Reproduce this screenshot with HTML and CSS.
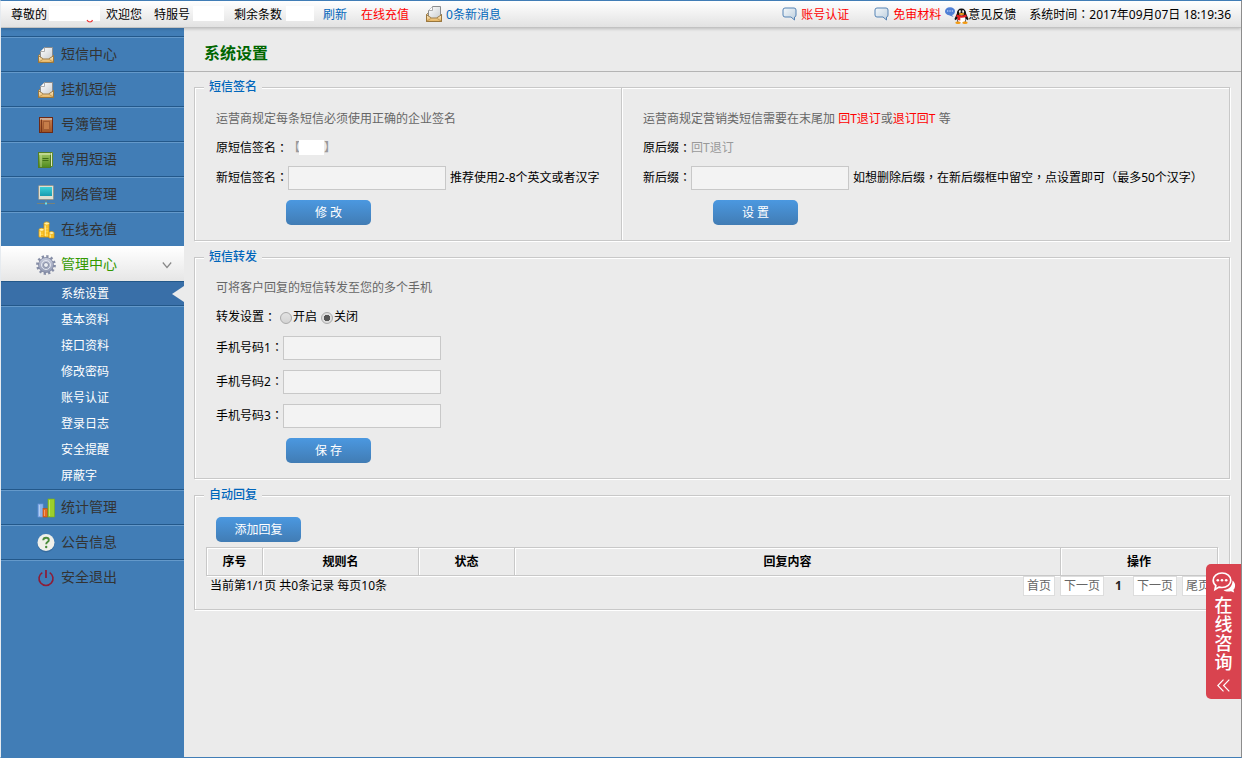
FILE: index.html
```html
<!DOCTYPE html>
<html lang="zh-CN">
<head>
<meta charset="utf-8">
<title>系统设置</title>
<link rel="stylesheet" href="styles.css">
</head>
<body>
<svg class="defs" aria-hidden="true">
  <defs>
    <linearGradient id="g-env" x1="0" y1="0" x2="0" y2="1"><stop offset="0" stop-color="#fdf0d2"/><stop offset="1" stop-color="#e5b058"/></linearGradient>
    <linearGradient id="g-paper" x1="0" y1="0" x2="1" y2="1"><stop offset="0" stop-color="#fff"/><stop offset="1" stop-color="#c9cdd0"/></linearGradient>
    <linearGradient id="g-book" x1="0" y1="0" x2="0" y2="1"><stop offset="0" stop-color="#c98050"/><stop offset="1" stop-color="#9d5325"/></linearGradient>
    <linearGradient id="g-green" x1="0" y1="0" x2="0" y2="1"><stop offset="0" stop-color="#a3c964"/><stop offset="1" stop-color="#4f8a1e"/></linearGradient>
    <linearGradient id="g-screen" x1="0" y1="0" x2="0" y2="1"><stop offset="0" stop-color="#3bd0d8"/><stop offset="1" stop-color="#189cb0"/></linearGradient>
    <linearGradient id="g-gear" x1="0" y1="0" x2="0" y2="1"><stop offset="0" stop-color="#c9cddd"/><stop offset="1" stop-color="#8f97b0"/></linearGradient>
    <linearGradient id="g-bub" x1="0" y1="0" x2="1" y2="1"><stop offset="0" stop-color="#f4f8fb"/><stop offset="1" stop-color="#bccedd"/></linearGradient>
    <symbol id="mail" viewBox="0 0 16 16">
      <path d="M.5 8.500 3 6.500h10l2.500 2v7H.5z" fill="url(#g-env)" stroke="#94733c"/>
      <path d="M2.500 11V4.500l4-4h8V11l-2 1.500h-8z" fill="url(#g-paper)" stroke="#8b8d8e"/>
      <path d="M2.500 4.500h4v-4" fill="#fff" stroke="#999" stroke-width=".8"/>
      <path d="M.5 8.800 5.500 12h5l5-3.200v6.700H.5z" fill="url(#g-env)" stroke="#94733c" stroke-width=".9"/>
      <path d="m1 15 4.500-3M15 15l-4.500-3" fill="none" stroke="#b78f4c" stroke-width=".8"/>
    </symbol>
    <symbol id="bubble" viewBox="0 0 15 14">
      <path d="M3 1h9q2 0 2 2v5q0 2-1.500 2v3L9 10H3Q1 10 1 8V3q0-2 2-2z" fill="url(#g-bub)" stroke="#5583b5" stroke-linejoin="round"/>
    </symbol>
    <symbol id="book" viewBox="0 0 18 18">
      <rect x="2.500" y="1.500" width="13" height="15" fill="url(#g-book)" stroke="#6d2a17"/>
      <path d="M3 3h12" stroke="#d8dadb"/><path d="M4.500 3.500v13" stroke="#7a3518"/>
      <rect x="6.500" y="5.500" width="6" height="8" fill="#c67d49" stroke="#a25c33"/>
    </symbol>
    <symbol id="notes" viewBox="0 0 18 18">
      <path d="M13 1.500h2.500v14H13" fill="#dfeab8" stroke="#5f8a2d"/>
      <rect x="1.500" y="1.500" width="12" height="15" fill="url(#g-green)" stroke="#527d25"/>
      <path d="M2 3h12" stroke="#e3edc4"/><path d="M4 4v12" stroke="#d1e3a4" stroke-width=".8"/>
      <path d="M5.500 7.500h6M5.500 9.500h6" stroke="#3f6f17"/>
    </symbol>
    <symbol id="screen" viewBox="0 0 18 20">
      <rect x="1.500" y=".5" width="15" height="14" rx="1" fill="#dedfd2" stroke="#8c9491"/>
      <rect x="3" y="2" width="12" height="9" fill="url(#g-screen)"/>
      <path d="M9 15v4M0 18.500h18" stroke="#77827a"/><path d="M8 18.500h2" stroke="#6fe0e8" stroke-width="2"/>
    </symbol>
    <symbol id="coins" viewBox="0 0 18 18">
      <g fill="#ffd23b" stroke="#df9500" stroke-width=".8">
        <path d="M7 2.500v13.500h5V2.500z"/><path d="M2 9v7h5V9zM12 12v5h5v-5z"/>
      </g>
      <g fill="#fff0a6" stroke="#e5a200" stroke-width=".7">
        <ellipse cx="9.700" cy="2.500" rx="2.700" ry="1.600"/><ellipse cx="4.600" cy="8.800" rx="2.600" ry="1.500"/><ellipse cx="14.500" cy="12" rx="2.600" ry="1.500"/>
      </g>
      <path d="M7.500 6h4M7.500 9h4M7.500 12h4M2.500 12h4M2.500 14.500h4M12.500 15h4" stroke="#f0aa13" stroke-width=".8"/>
      <path d="M8.200 4.500V15M3.200 10.500V15.500M13.200 13.500v3" stroke="#fff2b0"/>
    </symbol>
    <symbol id="gear" viewBox="0 0 20 20">
      <circle cx="10" cy="10" r="8.500" fill="none" stroke="#858da6" stroke-width="2.800" stroke-dasharray="2.200 2.250"/>
      <circle cx="10" cy="10" r="7.500" fill="url(#g-gear)" stroke="#7c849e" stroke-width=".8"/>
      <circle cx="10" cy="10" r="4.500" fill="none" stroke="#e3e6ef"/>
      <circle cx="10" cy="10" r="2.500" fill="#eceef2" stroke="#848ca4"/>
    </symbol>
    <symbol id="bars" viewBox="0 0 18 20">
      <rect x="1" y="6" width="5" height="13" fill="#8bb2ea" stroke="#6d98dc" stroke-width=".6"/>
      <rect x="6" y="10.500" width="4.500" height="8.500" fill="#e5691f" stroke="#bf4c10" stroke-width=".6"/>
      <rect x="11" y="1" width="6.500" height="18" fill="#9ccf2c" stroke="#78ab13" stroke-width=".6"/>
      <path d="M2.500 7v11M12.500 2v16M7.500 12v6" stroke="#fff" stroke-opacity=".35"/>
    </symbol>
    <symbol id="help" viewBox="0 0 18 20">
      <ellipse cx="9" cy="11" rx="8.500" ry="8.500" fill="#275987" opacity=".45"/>
      <circle cx="9" cy="9.500" r="8.500" fill="#f0f0ea"/>
      <path d="M6.200 7.300q.2-2.600 2.900-2.600 2.700 0 2.700 2.200 0 1.300-1.300 2.100-1.300.8-1.300 2.300" fill="none" stroke="#4b8b3b" stroke-width="1.900"/>
      <circle cx="9.200" cy="14" r="1.200" fill="#4b8b3b"/>
    </symbol>
    <symbol id="power" viewBox="0 0 18 18">
      <path d="M5.300 3.600a7 7 0 1 0 7.400 0" fill="none" stroke="#8e1c36" stroke-width="1.600"/>
      <path d="M9 1v8" stroke="#8e1c36" stroke-width="1.700"/>
    </symbol>
    <symbol id="chat" viewBox="0 0 10 10">
      <path d="M5 .3c3 0 5 1.700 5 3.900S8.300 8 7 8l1.500 2L4 8.200C1.500 7.800 0 6.200 0 4.200S2 .3 5 .3z" fill="#4f80d6"/>
      <path d="M2 4h1.300M4.400 4h1.300M6.800 4H8" stroke="#dce8ff" stroke-width="1.200"/>
    </symbol>
    <symbol id="penguin" viewBox="0 0 15 16">
      <path d="M7.500.5c3 0 4.600 2 4.600 5l2.400 5.500-.8 1.200-1.400-1.200-1 3.500H3.700l-1-3.500-1.400 1.200L.5 11l2.400-5.500c0-3 1.600-5 4.600-5z" fill="#111"/>
      <ellipse cx="7.500" cy="11.300" rx="4" ry="3.700" fill="#fff"/>
      <ellipse cx="4" cy="14.700" rx="2.700" ry="1.200" fill="#f39a12"/><ellipse cx="11" cy="14.700" rx="2.700" ry="1.200" fill="#f39a12"/>
      <ellipse cx="6" cy="3.700" rx="1.100" ry="1.400" fill="#fff"/><ellipse cx="9" cy="3.700" rx="1.100" ry="1.400" fill="#fff"/>
      <circle cx="6.300" cy="3.900" r=".5"/><circle cx="8.700" cy="3.900" r=".5"/>
      <ellipse cx="7.500" cy="6" rx="2.800" ry=".9" fill="#f6a31a"/>
      <path d="M2.800 6.500q4.700 2.300 9.400 0l.6 2.200Q7.500 11 2.200 8.700zM3.600 9l2.700.9v2.600l-2.700-.5z" fill="#e51d20"/>
    </symbol>
  </defs>
</svg>

<header class="topbar">
  <div class="account">
    <span>尊敬的</span>
    <span class="blank blank-user"><svg viewBox="0 0 51 17"><path d="M38 14q1 2 3 2t2.500-2" fill="none" stroke="#e33" stroke-width="1.200"/></svg></span>
    <span class="welcome">欢迎您</span>
    <span>特服号</span>
    <span class="blank blank-no"></span>
    <span>剩余条数</span>
    <span class="blank blank-count"></span>
    <a class="refresh" href="#">刷新</a>
    <a class="recharge" href="#">在线充值</a>
    <a class="message" href="#"><svg class="i16"><use href="#mail"/></svg>0条新消息</a>
  </div>
  <div class="tools">
    <a class="red verify" href="#"><svg class="i-bubble"><use href="#bubble"/></svg>账号认证</a>
    <a class="red" href="#"><svg class="i-bubble"><use href="#bubble"/></svg>免审材料</a>
    <a class="feedback" href="#"><svg class="i-chat"><use href="#chat"/></svg><svg class="i-qq"><use href="#penguin"/></svg>意见反馈</a>
    <span class="clock">系统时间<span class="cp" lang="zh-TW">：</span>2017年09月07日 18:19:36</span>
  </div>
</header>

<div class="shell">
  <nav class="sidebar">
    <a class="item" href="#"><svg><use href="#mail" x="1" y="2" width="16" height="16"/></svg>短信中心</a>
    <a class="item" href="#"><svg><use href="#mail" x="1" y="2" width="16" height="16"/></svg>挂机短信</a>
    <a class="item" href="#"><svg><use href="#book"/></svg>号簿管理</a>
    <a class="item" href="#"><svg><use href="#notes"/></svg>常用短语</a>
    <a class="item" href="#"><svg><use href="#screen"/></svg>网络管理</a>
    <a class="item" href="#"><svg><use href="#coins"/></svg>在线充值</a>
    <a class="item open" href="#"><svg class="cog"><use href="#gear"/></svg>管理中心<svg class="chev" viewBox="0 0 10 8"><path d="M.8 1.500 5 6.500l4.200-5" fill="none" stroke="#888" stroke-width="1.200"/></svg></a>
    <div class="submenu">
      <a class="current" href="#">系统设置</a>
      <a href="#">基本资料</a>
      <a href="#">接口资料</a>
      <a href="#">修改密码</a>
      <a href="#">账号认证</a>
      <a href="#">登录日志</a>
      <a href="#">安全提醒</a>
      <a href="#">屏蔽字</a>
    </div>
    <a class="item" href="#"><svg><use href="#bars"/></svg>统计管理</a>
    <a class="item" href="#"><svg><use href="#help"/></svg>公告信息</a>
    <a class="item" href="#"><svg><use href="#power"/></svg>安全退出</a>
  </nav>

  <main class="main">
    <h1>系统设置</h1>
    <div class="panels">
      <fieldset>
        <legend>短信签名</legend>
        <div class="split">
          <div class="pane">
            <p class="row tip">运营商规定每条短信必须使用正确的企业签名</p>
            <p class="row">原短信签名<span class="cp" lang="zh-TW">：</span><span class="old sign">【<span class="blank blank-sign"></span>】</span></p>
            <div class="row field"><label for="sign">新短信签名<span class="cp" lang="zh-TW">：</span></label><input id="sign" class="text" type="text"><span class="hint">推荐使用2-8个英文或者汉字</span></div>
            <div class="action"><button class="btn" type="button">修 改</button></div>
          </div>
          <div class="pane">
            <p class="row tip">运营商规定营销类短信需要在末尾加&nbsp;<em>回T退订</em>或<em>退订回T</em>&nbsp;等</p>
            <p class="row">原后缀<span class="cp" lang="zh-TW">：</span><span class="old">回T退订</span></p>
            <div class="row field"><label for="suffix">新后缀<span class="cp" lang="zh-TW">：</span></label><input id="suffix" class="text" type="text"><span class="hint">如想删除后缀<span class="cp" lang="zh-TW">，</span>在新后缀框中留空<span class="cp" lang="zh-TW">，</span>点设置即可<span class="cp" lang="zh-TW">（</span>最多50个汉字<span class="cp" lang="zh-TW">）</span></span></div>
            <div class="action"><button class="btn" type="button">设 置</button></div>
          </div>
        </div>
      </fieldset>

      <fieldset>
        <legend>短信转发</legend>
        <div class="forward">
          <p class="row tip">可将客户回复的短信转发至您的多个手机</p>
          <div class="row">转发设置<span class="cp" lang="zh-TW">：</span>
            <span class="radios"><input id="on" type="radio" name="forward"><label for="on">开启</label><input id="off" type="radio" name="forward" checked><label for="off">关闭</label></span>
          </div>
          <div class="row phone"><label for="p1">手机号码1<span class="cp" lang="zh-TW">：</span></label><input id="p1" class="text" type="text"></div>
          <div class="row phone"><label for="p2">手机号码2<span class="cp" lang="zh-TW">：</span></label><input id="p2" class="text" type="text"></div>
          <div class="row phone"><label for="p3">手机号码3<span class="cp" lang="zh-TW">：</span></label><input id="p3" class="text" type="text"></div>
          <div class="action"><button class="btn" type="button">保 存</button></div>
        </div>
      </fieldset>

      <fieldset>
        <legend>自动回复</legend>
        <div class="reply">
          <button class="btn add" type="button">添加回复</button>
          <table class="rules">
            <colgroup><col class="c-no"><col class="c-name"><col class="c-state"><col><col class="c-op"></colgroup>
            <thead><tr><th>序号</th><th>规则名</th><th>状态</th><th>回复内容</th><th>操作</th></tr></thead>
          </table>
          <div class="footer">
            <span>当前第1/1页 共0条记录 每页10条</span>
            <div class="pager"><a href="#">首页</a><a href="#">下一页</a><b>1</b><a href="#">下一页</a><a href="#">尾页</a></div>
          </div>
        </div>
      </fieldset>
    </div>
  </main>
</div>

<button class="consult" type="button">
  <svg class="talk" viewBox="0 0 24 21"><path d="M20.500 8.500c2 1.500 3 3.500 2.500 6-.2 1.500-.8 2.500-1.600 3.300l.8 2.600-3.200-1.200c-3 .8-6 .2-7.500-1.200 5 0 9-3.500 9-9.500z" fill="#fff"/><path d="M10 1c5 0 8.800 3.200 8.800 7.300S15 15.500 10 15.500c-1 0-2-.1-3-.4L3 17.500l.8-4C2 12.200 1.200 10.400 1.200 8.300 1.200 4.200 5 1 10 1z" fill="#d9434f" stroke="#fff" stroke-width="1.700"/><circle cx="5.800" cy="8.300" r="1.300" fill="#fff"/><circle cx="10" cy="8.300" r="1.300" fill="#fff"/><circle cx="14.200" cy="8.300" r="1.300" fill="#fff"/></svg>
  <span>在线咨询</span>
  <svg class="arrows" viewBox="0 0 13 13"><path d="M6.500.7.8 6.500l5.700 5.800M12.300.7 6.600 6.500l5.700 5.800" fill="none" stroke="#fff" stroke-width="1.200"/></svg>
</button>
</body>
</html>
```
FILE: styles.css
```css
* { box-sizing: border-box; }

body {
  margin: 0;
  min-height: 100vh;
  display: flex;
  flex-direction: column;
  border: 1px solid #417db6;
  border-left-color: #e6ebf0;
  border-right-color: #8c8c8c;
  background: #ebebeb;
  color: #000;
  font: 12px/16px "Noto Sans", "Noto Sans CJK SC", sans-serif;
}

a { color: inherit; text-decoration: none; }
p { margin: 0; }
button, input { font: inherit; }
.defs { position: absolute; width: 0; height: 0; }
.cp { font-family: "Noto Sans CJK TC", sans-serif; line-height: 1; }
.blank { display: inline-block; height: 15px; background: #fff; }

/* top bar */
.topbar {
  position: relative;
  display: flex;
  justify-content: space-between;
  height: 27px;
  padding: 2px 10px 0;
  background: linear-gradient(#fff, #e2e2e2);
  border-bottom: 1px solid #c2c2c2;
  box-shadow: 0 1px 3px rgba(0, 0, 0, .2);
  white-space: nowrap;
}
.account, .tools, .topbar a { display: flex; align-items: center; }
.topbar .blank { margin-bottom: 4px; }
.blank-user { width: 51px; margin: 0 6px 0 2px; }
.blank-user svg { display: block; width: 51px; height: 17px; }
.welcome { margin-right: 12px; }
.blank-no { width: 31px; margin: 0 10px 0 3px; }
.blank-count { width: 28px; margin: 0 9px 0 4px; }
.topbar .refresh { margin-right: 14px; color: #06b; }
.topbar .recharge { margin-right: 17px; color: #f00; }
.topbar .message { gap: 4px; color: #06b; }
.i16 { width: 16px; height: 16px; margin-bottom: 2px; }
.topbar .red { gap: 4px; margin-right: 4px; color: #f00; }
.topbar .verify { margin-right: 25px; }
.i-bubble { width: 15px; height: 14px; margin-bottom: 2px; }
.i-chat { width: 10px; height: 10px; margin-bottom: 6px; }
.i-qq { width: 15px; height: 16px; margin: 2px -1px 0 -1px; }
.clock { margin-left: 13px; }

/* side menu */
.shell { flex: 1; display: flex; }
.sidebar {
  flex: none;
  width: 183px;
  padding-top: 8px;
  background: #417db6;
}
.item {
  display: flex;
  align-items: center;
  gap: 6px;
  height: 35px;
  padding: 0 12px 0 36px;
  border-top: 1px solid #23588a;
  box-shadow: inset 0 1px #6499ca;
  color: #333;
  font-size: 14px;
}
.item svg { flex: none; width: 18px; height: 20px; margin-top: 2px; }
.item .cog { width: 20px; margin: 2px -1px 0; }
.item.open {
  border-top-color: #fff;
  background: linear-gradient(#fff, #e6e6e6);
  box-shadow: none;
  color: #390;
}
.item .chev { width: 10px; height: 8px; margin-left: auto; }
.submenu a {
  display: block;
  height: 26px;
  padding-left: 60px;
  color: #fff;
  line-height: 26px;
}
.submenu .current {
  position: relative;
  border-top: 1px solid #23588a;
  border-bottom: 1px solid #6499ca;
  background: #396fa8;
  box-shadow: inset 0 -1px #23588a;
  line-height: 24px;
}
.current::after {
  content: "";
  position: absolute;
  top: 4px;
  right: 0;
  border: 8px solid transparent;
  border-left: 0;
  border-right: 12px solid #ebebeb;
}

/* content */
.main { flex: 1; min-width: 0; }
h1 {
  height: 44px;
  margin: 0;
  padding: 5px 20px 0;
  border-bottom: 1px solid #b4b4b4;
  color: #060;
  font-size: 16px;
  line-height: 40px;
}
.panels { display: grid; gap: 8px; padding: 7px 11px 7px 10px; }
fieldset {
  min-width: 0;
  margin: 0;
  padding: 0;
  border: 1px solid #c8c8c8;
  box-shadow: 1px 1px #fff, inset 1px 1px #fff;
}
legend {
  margin-left: 9px;
  padding: 0 5px;
  background: #ebebeb;
  color: #06b;
  font-weight: 500;
}
.split {
  display: grid;
  grid-template-columns: 426px 1fr;
  margin-top: -7px;
}
.pane { padding: 16px 0 15px 21px; white-space: nowrap; }
.pane + .pane { border-left: 1px solid #c8c8c8; box-shadow: inset 1px 0 #fff; }
.forward { padding: 8px 21px 15px; }
.row { display: flex; align-items: center; height: 29px; }
.row.field { height: 32px; }
.row.phone { height: 34px; }
.tip { color: #666; }
.tip em { color: #f00; font-style: normal; }
.old { color: #999; }
.sign { display: flex; align-items: center; }
.blank-sign { z-index: 1; width: 25px; margin: 0 0 0 -1px; }
.hint { margin-left: 4px; }
.text {
  width: 158px;
  height: 24px;
  padding: 0 4px;
  border: 1px solid #c8c8c8;
  background: #f3f3f3;
}
.btn {
  width: 85px;
  height: 25px;
  padding: 0;
  border: 0;
  border-radius: 5px;
  background: linear-gradient(#4b98e0, #417cb4);
  color: #fff;
}
.action { padding: 6px 0 0 70px; line-height: 0; }
.phone + .action { padding-top: 5px; }
.radios { display: flex; align-items: center; margin-left: 4px; }
.radios input {
  appearance: none;
  width: 12px;
  height: 12px;
  margin: 2px 1px 0 0;
  border: 1px solid #aaa;
  border-radius: 50%;
  background: linear-gradient(#e2e2e2, #d4d4d4);
}
.radios input:checked { background: radial-gradient(circle, #555 0 3px, #ddd 3px); }
.radios label { margin-right: 4px; }

.reply { padding: 14px 11px 13px; }
.add { display: block; margin: 0 0 5px 10px; }
.rules {
  width: 100%;
  table-layout: fixed;
  border-collapse: separate;
  border-spacing: 0;
  border: 1px solid #c8c8c8;
  border-left: 0;
  box-shadow: 1px 1px #fff;
}
.rules th {
  height: 27px;
  padding: 0;
  border-left: 1px solid #c8c8c8;
  box-shadow: inset 1px 1px #fff;
}
.c-no { width: 56px; }
.c-name { width: 156px; }
.c-state { width: 96px; }
.c-op { width: 157px; }
.footer {
  display: flex;
  justify-content: space-between;
  align-items: center;
  padding: 0 4px;
}
.pager { display: flex; align-items: center; gap: 5px; }
.pager a {
  padding: 1px 3px;
  border: 1px solid #ddd;
  background: #fff;
  color: #666;
}
.pager b { width: 19px; color: #222; text-align: center; }

/* floating consult tab */
.consult {
  position: fixed;
  right: 1px;
  bottom: 59px;
  display: flex;
  flex-direction: column;
  align-items: center;
  width: 35px;
  padding: 8px 5px 7px;
  border: 0;
  border-radius: 5px 0 0 5px;
  background: #d9434f;
  color: #fff;
  font-size: 18px;
  font-weight: 500;
  line-height: 19px;
}
.consult span { width: 18px; margin: 3px 0 7px; overflow-wrap: anywhere; }
.talk { width: 24px; height: 21px; }
.arrows { width: 13px; height: 13px; }
```
